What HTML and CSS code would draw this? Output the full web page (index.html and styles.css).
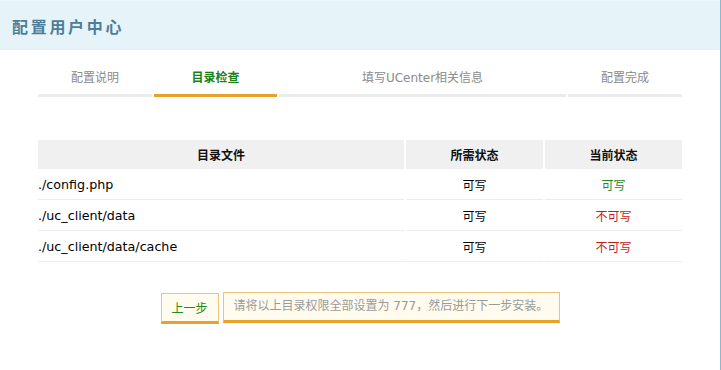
FILE: index.html
```html
<!DOCTYPE html>
<html lang="zh-CN">
<head>
<meta charset="utf-8">
<title>配置用户中心</title>
<link rel="stylesheet" href="styles.css">
</head>
<body>
<div class="page">
  <div class="header"><h1 class="title">配置用户中心</h1></div>
  <div class="content">
    <div class="tabs">
      <div class="tab t1">配置说明</div>
      <div class="tab t2 active">目录检查</div>
      <div class="tab t3">填写UCenter相关信息</div>
      <div class="tab t4">配置完成</div>
    </div>
    <table class="dirs">
      <thead>
        <tr><th class="c1">目录文件</th><th class="c2">所需状态</th><th class="c3">当前状态</th></tr>
      </thead>
      <tbody>
        <tr><td class="path">./config.php</td><td class="st">可写</td><td class="st ok">可写</td></tr>
        <tr><td class="path">./uc_client/data</td><td class="st">可写</td><td class="st bad">不可写</td></tr>
        <tr><td class="path">./uc_client/data/cache</td><td class="st">可写</td><td class="st bad">不可写</td></tr>
      </tbody>
    </table>
    <div class="actions">
      <button class="btn" type="button">上一步</button>
      <div class="notice">请将以上目录权限全部设置为 777，然后进行下一步安装。</div>
    </div>
  </div>
</div>
</body>
</html>
```

FILE: styles.css
```css
html, body {
  margin: 0;
  padding: 0;
  background: #fff;
}
body {
  font-family: "DejaVu Sans", "Noto Sans CJK SC", sans-serif;
  font-size: 12px;
  color: #000;
}
.page {
  width: 720px;
  height: 370px;
  border-right: 1px solid #8cb8d0;
}
.header {
  height: 49px;
  border-top: 1px solid #eef8fc;
  background: #e6f4fa;
  display: flex;
  align-items: center;
  padding-left: 12px;
}
.title {
  margin: 0;
  font-family: "Noto Sans CJK SC", sans-serif;
  font-size: 16px;
  font-weight: bold;
  letter-spacing: 2.7px;
  color: #4d7d98;
  line-height: 20px;
  padding-top: 1px;
}
.content {
  padding: 0 38px;
}
.tabs {
  display: flex;
  gap: 2px;
  margin-top: 20px;
}
.tab {
  line-height: 16px;
  padding-bottom: 8px;
  border-bottom: 3px solid #ebebeb;
  text-align: center;
  color: #8a8a8a;
}
.t1 { width: 114px; }
.t2 { width: 123px; }
.t3 { width: 287px; }
.t4 { width: 114px; }
.tab.active {
  color: #188018;
  font-weight: bold;
  border-bottom-color: #e8a22c;
}
.dirs {
  margin: 43px 0 0 -2px;
  border-collapse: separate;
  border-spacing: 2px 0;
  width: 648px;
  table-layout: fixed;
}
.dirs th {
  height: 29px;
  padding: 0;
  background: #f0f0f0;
  font-weight: bold;
  text-align: center;
  color: #111;
}
.c1 { width: 366px; }
.c2 { width: 137px; }
.c3 { width: 137px; }
.dirs td {
  height: 30px;
  padding: 0;
  border-bottom: 1px solid #ececec;
}
.path {
  font-size: 12.7px;
  text-align: left;
}
.st {
  text-align: center;
}
.ok { color: #1c8a1c; }
.bad { color: #c41a1a; }
.actions {
  display: flex;
  justify-content: center;
  align-items: flex-start;
  gap: 4px;
  margin-top: 30px;
}
.btn {
  margin-top: 1px;
  font: inherit;
  color: #1a8a1a;
  background: #fffbee;
  border: 1px solid #ecc478;
  border-bottom: 3px solid #e8a22c;
  width: 58px;
  height: 31px;
  padding: 0;
}
.notice {
  box-sizing: border-box;
  height: 31px;
  line-height: 27px;
  padding: 0 10px;
  background: #fffbee;
  border: 1px solid #ecc478;
  border-bottom: 3px solid #e8a22c;
  color: #9a9a9a;
  width: 337px;
}
```
